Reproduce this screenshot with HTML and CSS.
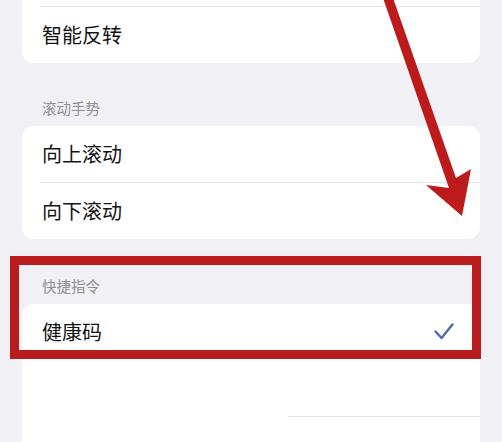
FILE: index.html
```html
<!DOCTYPE html>
<html lang="zh-CN">
<head>
<meta charset="utf-8">
<link rel="stylesheet" href="styles.css">
</head>
<body>
<div class="page">
  <div class="card card-first">
    <div class="row"></div>
    <div class="divider"></div>
    <div class="row"><span class="label">智能反转</span></div>
  </div>

  <div class="section-header first-header">滚动手势</div>
  <div class="card">
    <div class="row"><span class="label">向上滚动</span></div>
    <div class="divider"></div>
    <div class="row"><span class="label">向下滚动</span></div>
  </div>

  <div class="section-header second-header">快捷指令</div>
  <div class="card card-last">
    <div class="row">
      <span class="label">健康码</span>
      <svg class="check" width="20" height="17" viewBox="0 0 20 17">
        <polyline points="1.5,8.5 7.5,15 18.5,1.5" fill="none" stroke="#4a6db0" stroke-width="2.4" stroke-linecap="round" stroke-linejoin="round"/>
      </svg>
    </div>
    <div class="row"></div>
    <div class="divider divider-short"></div>
    <div class="row row-cut"></div>
  </div>
</div>

<div class="highlight-box"></div>

<svg class="arrow" width="502" height="442" viewBox="0 0 502 442">
  <polygon points="383,-2 393,-2 456,178 471,169 462,216 426,185 449,188" fill="#bd1a1c"/>
</svg>
</body>
</html>
```

FILE: styles.css
```css
html, body {
  margin: 0;
  padding: 0;
}

body {
  width: 502px;
  height: 442px;
  overflow: hidden;
  background: #f1f1f5;
  font-family: "Noto Sans CJK SC", "Noto Sans", sans-serif;
  position: relative;
}

.page {
  padding: 0 22px;
  display: flex;
  flex-direction: column;
}

.card {
  background: #ffffff;
  border-radius: 12px;
  display: flex;
  flex-direction: column;
}

.card-first {
  margin-top: -50px;
}

.card-last {
  border-bottom-left-radius: 0;
  border-bottom-right-radius: 0;
}

.row {
  height: 56px;
  display: flex;
  align-items: center;
  justify-content: space-between;
  padding: 0 26px 0 20px;
}

.row-cut {
  height: 26px;
}

.label {
  font-size: 20px;
  color: #141414;
  line-height: 1;
}

.divider {
  height: 1px;
  background: #e4e4e8;
  margin-left: 18px;
}

.divider-short {
  margin-left: 266px;
}

.section-header {
  font-size: 14.5px;
  color: #8e8e93;
  line-height: 20px;
  padding-left: 20px;
}

.first-header {
  padding-top: 35px;
  padding-bottom: 8px;
}

.second-header {
  padding-top: 37px;
  padding-bottom: 8px;
}

.check {
  display: block;
  margin-top: -2px;
}

.highlight-box {
  position: absolute;
  left: 10px;
  top: 256px;
  width: 471px;
  height: 103px;
  box-sizing: border-box;
  border: 9px solid #b91c1c;
}

.arrow {
  position: absolute;
  left: 0;
  top: 0;
  pointer-events: none;
}
```
